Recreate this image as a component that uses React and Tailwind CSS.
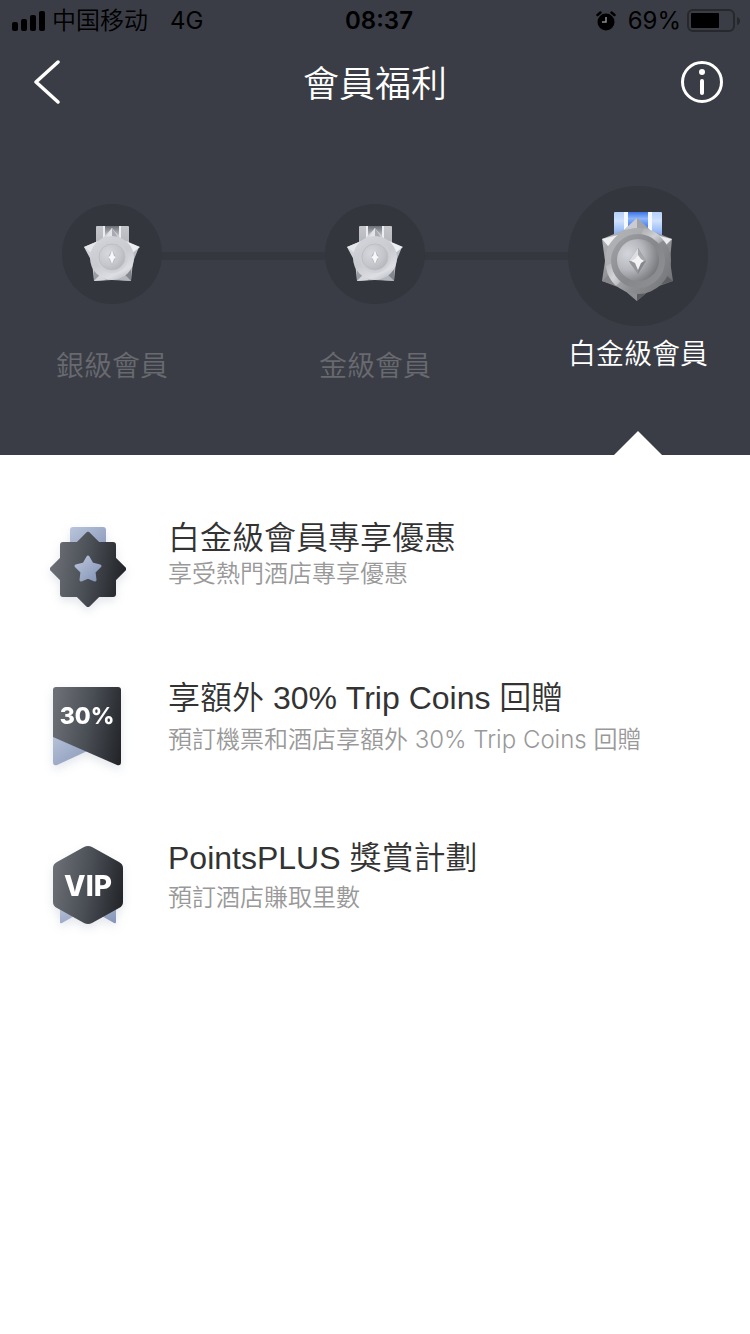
import React, { useState } from 'react';

const SmallMedal = ({ id }) => (
  <svg viewBox="0 0 100 100" className="w-[100px] h-[100px]" aria-hidden="true">
    <defs>
      <linearGradient id={`${id}-star`} x1="0" y1="0" x2="0.8" y2="1">
        <stop offset="0" stopColor="#dddfe4" />
        <stop offset="0.5" stopColor="#cbcdd3" />
        <stop offset="1" stopColor="#a6a8b0" />
      </linearGradient>
      <linearGradient id={`${id}-ribbon`} x1="0" y1="0" x2="0" y2="1">
        <stop offset="0" stopColor="#c3c5ca" />
        <stop offset="1" stopColor="#b0b2ba" />
      </linearGradient>
      <linearGradient id={`${id}-fold`} x1="0" y1="0" x2="0" y2="1">
        <stop offset="0" stopColor="#6e7078" />
        <stop offset="0.6" stopColor="#c0c2c8" />
      </linearGradient>
      <linearGradient id={`${id}-disc`} x1="0.2" y1="0" x2="0.7" y2="1">
        <stop offset="0" stopColor="#d3d5da" />
        <stop offset="0.5" stopColor="#c8cacf" />
        <stop offset="0.85" stopColor="#dcdee3" />
        <stop offset="1" stopColor="#c0c2c8" />
      </linearGradient>
      <radialGradient id={`${id}-core`} cx="0.35" cy="0.35" r="0.8">
        <stop offset="0" stopColor="#d6d8dd" />
        <stop offset="0.6" stopColor="#c4c6cb" />
        <stop offset="1" stopColor="#aeb0b6" />
      </radialGradient>
    </defs>
    <rect x="34" y="22" width="33" height="24" rx="1" fill={`url(#${id}-ribbon)`} />
    <path d="M43 22h15v16H43z" fill={`url(#${id}-fold)`} />
    <path d="M41 22h2v20h-2zM57 22h2v20h-2z" fill="#ececf1" />
    <path d="M50 24l10 12 17 7-6 15-2 19-19-1-18 1-2-19-8-15 17-7z" fill={`url(#${id}-star)`} />
    <path d="M50 24v9l-7 2z" fill="#e2e4e8" />
    <path d="M50 24v9l7 2z" fill="#a9abb2" />
    <path d="M22 43l9 7 5-13z" fill="#e4e6ea" />
    <path d="M78 43l-9 7-5-13z" fill="#eceef1" />
    <path d="M32 77l6-6-6-8z" fill="#9b9da5" />
    <path d="M32 77l6-6 6 5z" fill="#d5d7dc" />
    <path d="M69 77l-6-6 6-8z" fill="#84868e" />
    <path d="M69 77l-6-6-6 5z" fill="#b5b7be" />
    <circle cx="50" cy="54" r="22" fill={`url(#${id}-disc)`} />
    <circle cx="50" cy="53" r="16" fill="#cdcfd4" opacity="0.7" />
    <circle cx="50" cy="53" r="13" fill={`url(#${id}-core)`} stroke="#bdbfc5" />
    <path d="M50 46l4 7-4 8-4-8z" fill="#b4b6bc" />
    <path d="M50 46l2 6 2 1-2 2-2 5-2-5-2-2 2-1z" fill="#f7f7fa" />
  </svg>
);

const PlatinumMedal = () => (
  <svg viewBox="0 0 140 140" className="w-[140px] h-[140px]" aria-hidden="true">
    <defs>
      <linearGradient id="pt-side" x1="0" y1="0" x2="0" y2="1">
        <stop offset="0" stopColor="#b5d0f9" />
        <stop offset="0.3" stopColor="#cfe1fd" />
        <stop offset="1" stopColor="#5f93f0" />
      </linearGradient>
      <linearGradient id="pt-mid" x1="0" y1="0" x2="0" y2="1">
        <stop offset="0" stopColor="#3c76e6" />
        <stop offset="0.3" stopColor="#8fb5fa" />
        <stop offset="0.7" stopColor="#3f7ff0" />
      </linearGradient>
      <linearGradient id="pt-star" x1="0.2" y1="0" x2="0.7" y2="1">
        <stop offset="0" stopColor="#b9bbc0" />
        <stop offset="1" stopColor="#6b6d71" />
      </linearGradient>
      <linearGradient id="pt-ring" x1="0" y1="0.2" x2="1" y2="0.8">
        <stop offset="0" stopColor="#b0b2b6" />
        <stop offset="0.35" stopColor="#a9abaf" />
        <stop offset="0.6" stopColor="#8c8e92" />
        <stop offset="1" stopColor="#75777b" />
      </linearGradient>
      <linearGradient id="pt-inner" x1="0" y1="0" x2="1" y2="0.8">
        <stop offset="0" stopColor="#a2a4a8" />
        <stop offset="0.6" stopColor="#85878b" />
        <stop offset="1" stopColor="#8d8f93" />
      </linearGradient>
      <linearGradient id="pt-shine" x1="0" y1="0" x2="1" y2="1">
        <stop offset="0" stopColor="#dedfe2" stopOpacity="0" />
        <stop offset="0.5" stopColor="#dedfe2" stopOpacity="0.8" />
        <stop offset="1" stopColor="#dedfe2" stopOpacity="0" />
      </linearGradient>
      <radialGradient id="pt-core" cx="0.25" cy="0.35" r="0.85">
        <stop offset="0" stopColor="#d3d5dc" />
        <stop offset="0.45" stopColor="#b6b8bd" />
        <stop offset="1" stopColor="#6c6e72" />
      </radialGradient>
    </defs>
    <rect x="46" y="26" width="48" height="30" rx="1" fill="url(#pt-side)" />
    <path d="M56 26h28v26H56z" fill="#f5f9ff" />
    <path d="M60 26h20v22H60z" fill="url(#pt-mid)" />
    <path d="M69 32l13 12 22 9-2 22 3 20-22 8-14 12-14-12-21-8 3-20-3-22 22-9z" fill="url(#pt-star)" />
    <path d="M69 32v10l-13 2z" fill="#c9cbd0" />
    <path d="M69 32v10l13 2z" fill="#a1a3a8" />
    <path d="M34 53l6 7 14-12z" fill="#eeeff1" />
    <path d="M104 53l-7 7-13-12z" fill="#ebecee" />
    <path d="M34 95l6-6 7 10z" fill="#85878b" />
    <path d="M105 95l-7-6-7 10z" fill="#5c5e62" />
    <path d="M69 115v-9l-14-3z" fill="#8d8f93" />
    <path d="M69 115v-9l14-3z" fill="#5a5c60" />
    <circle cx="70" cy="75" r="33" fill="url(#pt-ring)" />
    <path d="M76 42a33 33 0 0 1 20 12l-12 8-12-10z" fill="url(#pt-shine)" />
    <path d="M38 80a33 33 0 0 0 10 20l12-12-10-14z" fill="url(#pt-shine)" />
    <circle cx="70" cy="75" r="27" fill="url(#pt-inner)" />
    <circle cx="70" cy="74" r="21" fill="url(#pt-core)" />
    <path d="M70 62l8 13-8 13-9-13z" fill="#85878c" />
    <path d="M70 62v13h-9z" fill="#dcdde1" />
    <path d="M70 62l8 13h-8z" fill="#a5a7ab" />
    <path d="M61 75h9v13z" fill="#94969a" />
    <path d="M70 69l3 4 3 2-3 2-3 7-3-7-4-2 4-2z" fill="#f3f3f5" />
  </svg>
);

const iconClass = 'w-24 h-[104px] shrink-0 drop-shadow-[0_4px_5px_rgba(60,75,110,0.14)]';

const BadgeGradients = ({ id }) => (
  <defs>
    <linearGradient id={`${id}-dark`} gradientUnits="userSpaceOnUse" x1="12" y1="40" x2="86" y2="52">
      <stop offset="0" stopColor="#6c7076" />
      <stop offset="0.5" stopColor="#494d54" />
      <stop offset="1" stopColor="#212327" />
    </linearGradient>
    <linearGradient id={`${id}-blue`} x1="0" y1="0" x2="1" y2="1">
      <stop offset="0" stopColor="#bac5da" />
      <stop offset="1" stopColor="#8493b7" />
    </linearGradient>
  </defs>
);

const DealIcon = () => (
  <svg viewBox="0 0 96 104" className={iconClass} aria-hidden="true">
    <BadgeGradients id="deal" />
    <rect x="30" y="9" width="36" height="30" rx="3" fill="url(#deal-blue)" />
    <path
      d="M48 17L58 27H73V41L83 51L73 61V76H58L48 86L38 76H23V61L13 51L23 41V27H38Z"
      fill="url(#deal-dark)"
      stroke="url(#deal-dark)"
      strokeWidth="6"
      strokeLinejoin="round"
    />
    <path
      d="M48 39l4 7 8 2-6 6 1 8-7-3-7 3 1-8-6-6 8-2z"
      fill="url(#deal-blue)"
      stroke="url(#deal-blue)"
      strokeWidth="3"
      strokeLinejoin="round"
    />
  </svg>
);

const CoinsIcon = () => (
  <svg viewBox="0 0 96 104" className={iconClass} aria-hidden="true">
    <BadgeGradients id="coins" />
    <path d="M13 54v30q0 4 4 3L56 69z" fill="url(#coins-blue)" />
    <path d="M16 9h62q3 0 3 3v72q0 4-4 3L13 59V12q0-3 3-3z" fill="url(#coins-dark)" />
    <text x="47" y="46" textAnchor="middle" fontSize="23" fontWeight="800" fill="#fff">30%</text>
  </svg>
);

const VipIcon = () => (
  <svg viewBox="0 0 96 104" className={iconClass} aria-hidden="true">
    <BadgeGradients id="vip" />
    <path d="M20 66v18q0 2 2 1l14-8zM76 66v18q0 2-2 1l-14-8z" fill="url(#vip-blue)" />
    <path
      d="M44 9q4-2 8 0l27 15q4 2 4 6v34q0 4-4 6L52 85q-4 2-8 0L17 70q-4-2-4-6V30q0-4 4-6z"
      fill="url(#vip-dark)"
    />
    <text x="48" y="58" textAnchor="middle" fontSize="28" fontWeight="800" fill="#fff">VIP</text>
  </svg>
);

const tiers = [
  { key: 'silver', label: '銀級會員' },
  { key: 'gold', label: '金級會員' },
  { key: 'platinum', label: '白金級會員' },
];

const benefits = [
  { icon: DealIcon, title: '白金級會員專享優惠', text: '享受熱門酒店專享優惠', gap: 'gap-0' },
  { icon: CoinsIcon, title: '享額外 30% Trip Coins 回贈', text: '預訂機票和酒店享額外 30% Trip Coins 回贈', gap: 'gap-1.5' },
  { icon: VipIcon, title: 'PointsPLUS 獎賞計劃', text: '預訂酒店賺取里數', gap: 'gap-1' },
];

const StatusBar = () => (
  <div className="grid grid-cols-3 items-center h-[42px] pl-3 pr-2.5 text-2xl leading-10 text-black">
    <div className="flex items-center">
      <svg viewBox="0 0 34 20" className="w-[34px] h-5 mr-1.5" aria-hidden="true">
        <rect x="0" y="11" width="6" height="9" rx="2" />
        <rect x="9" y="8" width="6" height="12" rx="2" />
        <rect x="18" y="4" width="6" height="16" rx="2" />
        <rect x="27" y="0" width="6" height="20" rx="2" />
      </svg>
      <span lang="zh-CN" className="font-['Inter','Noto_Sans_CJK_SC',sans-serif] font-[350]">中国移动</span>
      <span className="ml-[22px]">4G</span>
    </div>
    <div className="pl-1.5 text-center font-semibold">08:37</div>
    <div className="flex items-center justify-end">
      <svg viewBox="0 0 20 20" className="w-5 h-5 mr-3" aria-hidden="true">
        <circle cx="10" cy="11" r="8.5" />
        <path d="M1.5 4l3-2.5M18.5 4l-3-2.5" stroke="#000" strokeWidth="2.5" strokeLinecap="round" />
        <path d="M10 6v5H6" fill="none" stroke="#8b8d92" strokeWidth="1.5" />
      </svg>
      <span>69%</span>
      <svg viewBox="0 0 53 24" className="w-[53px] h-6 ml-1.5" aria-hidden="true">
        <rect x="1" y="1" width="46" height="21" rx="5" fill="none" stroke="#26282c" strokeWidth="2" />
        <rect x="4" y="4" width="28" height="15" rx="1" />
        <path d="M50 8q3 1 3 4t-3 4z" fill="#26282c" />
      </svg>
    </div>
  </div>
);

function App() {
  const [activeTier, setActiveTier] = useState('platinum');

  return (
    <div className="min-h-screen bg-white font-['Inter','Noto_Sans_CJK_TC',sans-serif]" lang="zh-Hant">
      <header className="bg-[#3a3d45]">
        <StatusBar />

        <nav className="flex items-center justify-between h-20 pl-7 pr-6">
          <button type="button" aria-label="返回" className="cursor-pointer">
            <svg viewBox="0 0 44 44" className="w-11 h-11" fill="none" stroke="#fff" strokeLinecap="round" strokeLinejoin="round">
              <path d="M30 2L8 22L30 42" strokeWidth="3.5" />
            </svg>
          </button>
          <h1 className="pt-1 text-4xl font-[350] text-white">會員福利</h1>
          <button type="button" aria-label="說明" className="cursor-pointer">
            <svg viewBox="0 0 48 44" className="w-12 h-11" fill="none" stroke="#fff">
              <circle cx="24" cy="22" r="19.5" strokeWidth="3" />
              <circle cx="24" cy="12" r="3" fill="#fff" stroke="none" />
              <path d="M24 21v12" strokeWidth="4" strokeLinecap="round" />
            </svg>
          </button>
        </nav>

        <div className="relative flex justify-between items-start px-[42px] pt-16 h-[333px]">
          <div className="absolute left-[112px] right-[112px] top-[130px] h-2 bg-[#34373e]" />
          {tiers.map((tier) => {
            const isActive = tier.key === activeTier;
            return (
              <button
                key={tier.key}
                type="button"
                onClick={() => setActiveTier(tier.key)}
                className="relative flex flex-col items-center w-[140px] cursor-pointer"
              >
                <span className="flex items-center justify-center h-[140px]">
                  <span className={`rounded-full bg-[#33363d] ${tier.key === 'platinum' ? '' : 'mb-1'}`}>
                    {tier.key === 'platinum' ? <PlatinumMedal /> : <SmallMedal id={tier.key} />}
                  </span>
                </span>
                <span
                  className={`text-[28px] leading-10 font-[350] whitespace-nowrap ${
                    isActive ? 'mt-2 text-white' : 'mt-5 text-[#686a70]'
                  }`}
                >
                  {tier.label}
                </span>
                {isActive && (
                  <span className="mt-[57px] border-x-[24px] border-b-[24px] border-x-transparent border-b-white" />
                )}
              </button>
            );
          })}
        </div>
      </header>

      <main className="pt-[63px] pl-10 pr-6">
        <ul className="flex flex-col gap-14">
          {benefits.map((item) => {
            const Icon = item.icon;
            return (
              <li key={item.title} className="flex items-start gap-8">
                <Icon />
                <div className={`flex flex-col ${item.gap}`}>
                  <h2 className="font-['Liberation_Sans','Noto_Sans_CJK_TC',sans-serif] text-[32px] leading-10 font-[350] text-[#333]">
                    {item.title}
                  </h2>
                  <p className="text-2xl leading-8 font-[350] text-[#999]">{item.text}</p>
                </div>
              </li>
            );
          })}
        </ul>
      </main>
    </div>
  );
}

export default App;
